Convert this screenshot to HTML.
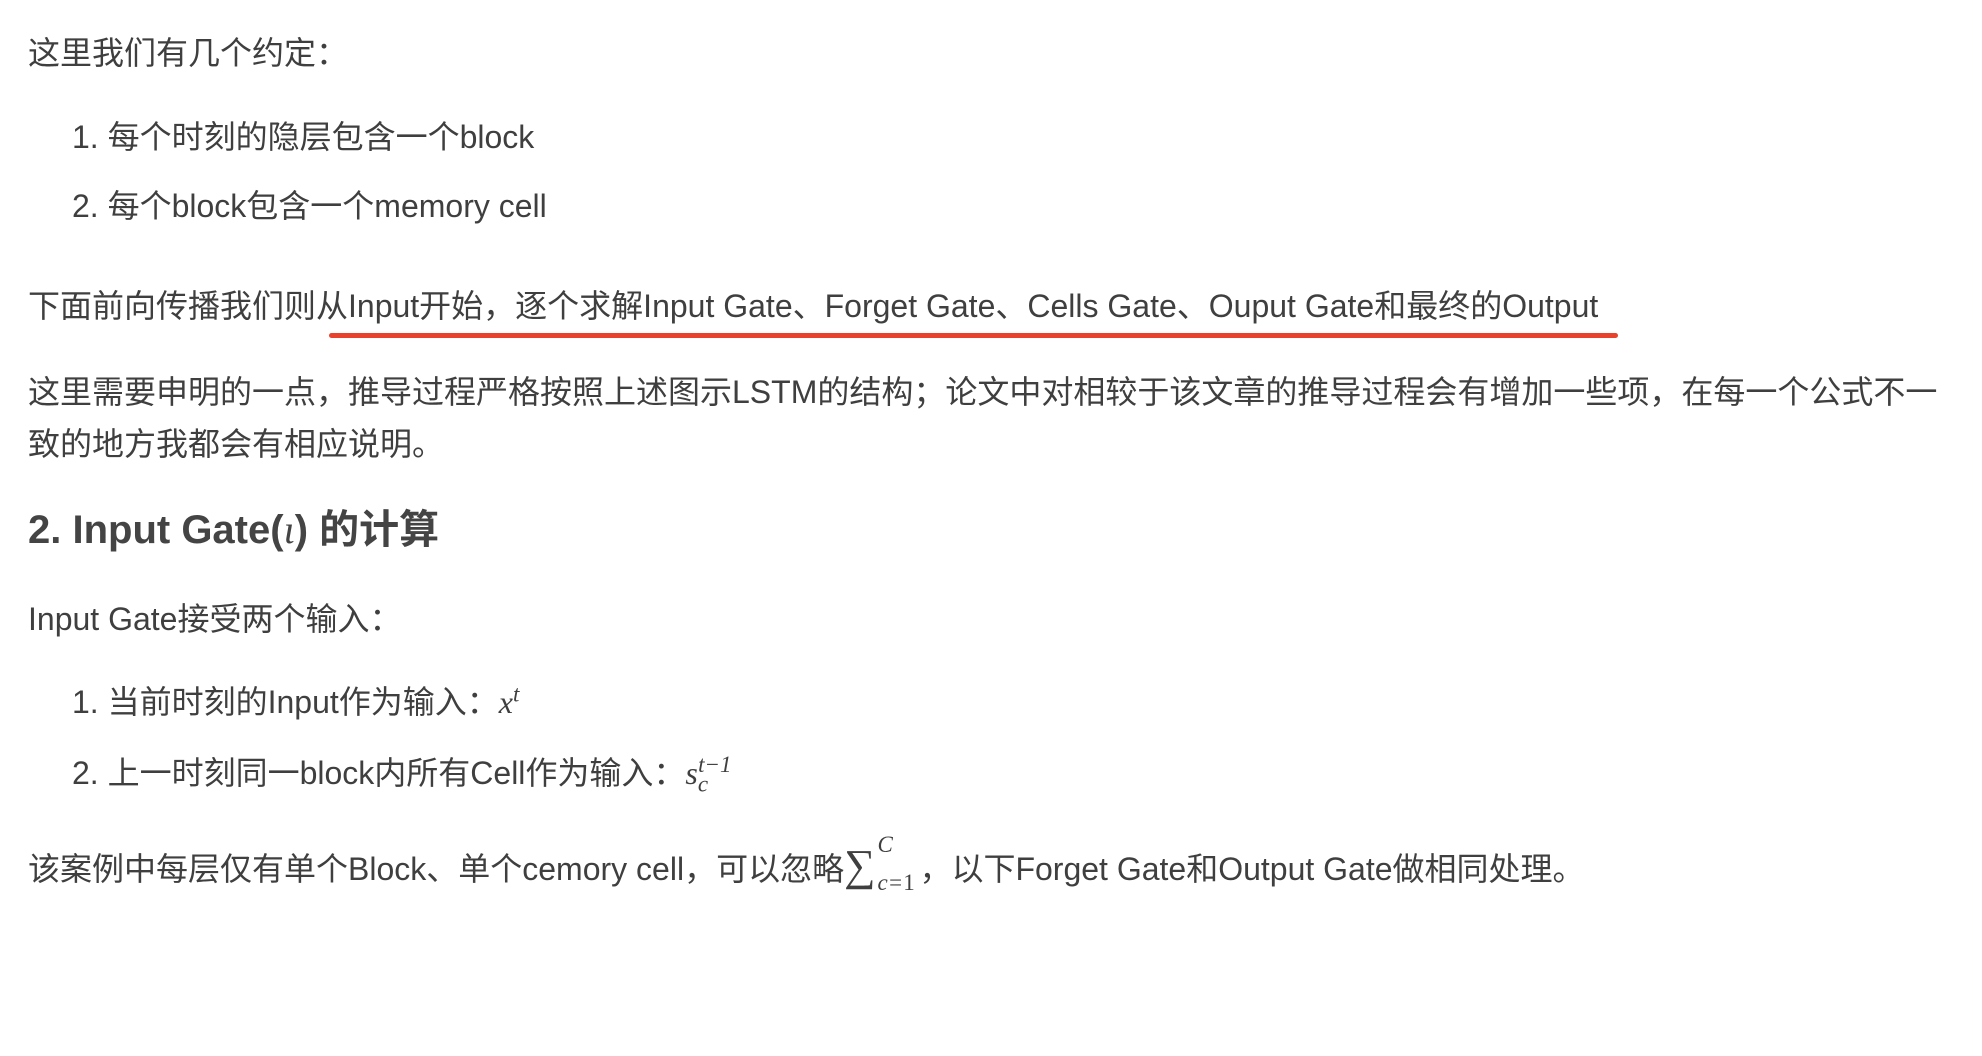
<!DOCTYPE html>
<html><head><meta charset="utf-8"><style>
body{margin:0;width:1982px;height:1056px;background:#fff;overflow:hidden;position:relative;font-family:"Liberation Sans","Noto Sans CJK SC",sans-serif;color:#3f3f3f}
.l{position:absolute;left:28px;font-size:32px;line-height:52px;white-space:nowrap}
.li{left:72px}
.m{font-family:"Liberation Serif",serif;font-style:italic;font-size:32px}
sup,sub{font-size:23px;line-height:0}
</style></head><body>
<div class="l" style="top:27px">这里我们有几个约定：</div>
<div class="l li" style="top:111px">1. 每个时刻的隐层包含一个block</div>
<div class="l li" style="top:180px">2. 每个block包含一个memory cell</div>
<div class="l" style="top:280px">下面前向传播我们则从Input开始，逐个求解Input Gate、Forget Gate、Cells Gate、Ouput Gate和最终的Output</div>
<div style="position:absolute;left:329px;top:333px;width:1289px;height:5px;background:#e8412c;border-radius:3px"></div>
<div class="l" style="top:366px">这里需要申明的一点，推导过程严格按照上述图示LSTM的结构；论文中对相较于该文章的推导过程会有增加一些项，在每一个公式不一</div>
<div class="l" style="top:418px">致的地方我都会有相应说明。</div>
<div class="l" style="top:502px;font-size:40px;font-weight:bold;line-height:56px;color:#444">2. Input Gate(<span class="m" style="font-weight:normal;font-size:40px">ι</span>) 的计算</div>
<div class="l" style="top:593px">Input Gate接受两个输入：</div>
<div class="l li" style="top:676px">1. 当前时刻的Input作为输入：<span class="m">x<sup>t</sup></span></div>
<div class="l li" style="top:747px">2. 上一时刻同一block内所有Cell作为输入：<span class="m">s<sub>c</sub><sup style="margin-left:-10px">t−1</sup></span></div>
<div class="l" style="top:840px">该案例中每层仅有单个Block、单个cemory cell，可以忽略<span class="m" style="font-style:normal;font-size:44px">∑</span><span class="m" style="display:inline-block;position:relative;width:44px;height:40px;vertical-align:middle"><span style="position:absolute;left:2px;top:-22px;font-size:23px;line-height:30px">C</span><span style="position:absolute;left:2px;top:16px;font-size:23px;line-height:30px">c=<span style="font-style:normal">1</span></span></span>，以下Forget Gate和Output Gate做相同处理。</div>
</body></html>
